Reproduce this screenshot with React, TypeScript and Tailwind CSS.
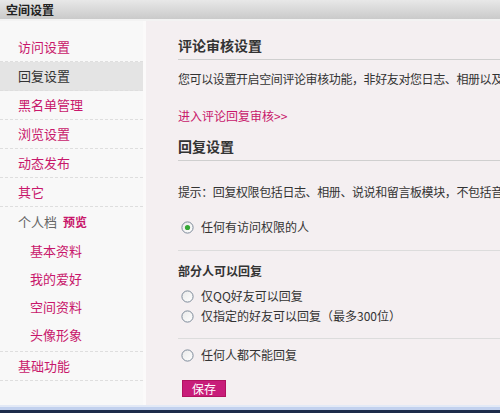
import React from "react";

const font = { fontFamily: '"Noto Sans CJK SC", "Noto Sans", sans-serif' };

function Radio({ checked }: { checked?: boolean }) {
  return (
    <svg width="13" height="13" viewBox="0 0 13 13" className="shrink-0">
      <defs>
        <linearGradient id={checked ? "rg1" : "rg0"} x1="0" y1="0" x2="1" y2="1">
          <stop offset="0" stopColor="#e9e9e9" />
          <stop offset="1" stopColor="#ffffff" />
        </linearGradient>
      </defs>
      <circle cx="6.5" cy="6.5" r="5.6" fill={`url(#${checked ? "rg1" : "rg0"})`} stroke="#7d8a99" strokeWidth="1" />
      {checked && <circle cx="6.5" cy="6.5" r="2.6" fill="#35a835" />}
    </svg>
  );
}

function SideRow({ label, active }: { label: string; active?: boolean }) {
  return (
    <div
      className={`h-[29px] flex items-center pl-[18px] text-[13px] border-b border-dashed border-[#dedede] ${
        active ? "bg-[#e4e4e4] text-[#333]" : "text-[#c8176b]"
      }`}
    >
      {label}
    </div>
  );
}

function SubRow({ label }: { label: string }) {
  return <div className="h-[28px] flex items-center pl-[30px] text-[13px] text-[#c8176b]">{label}</div>;
}

export default function App() {
  return (
    <div className="w-[500px] h-[413px] overflow-hidden flex flex-col bg-[#f4eff1]" style={font}>
      <div className="h-[19px] shrink-0 bg-gradient-to-b from-[#e8e8e8] to-[#cacaca] flex items-center pl-[6px] text-[12px] font-bold text-[#222]">
        空间设置
      </div>
      <div className="h-[2px] shrink-0 bg-[#f3f3f3]" />
      <div className="flex h-[384px] shrink-0">
        <div className="w-[146px] shrink-0 bg-[#f8f8f8] pt-[12px] border-r-[3px] border-[#fbfafa]">
          <SideRow label="访问设置" />
          <SideRow label="回复设置" active />
          <SideRow label="黑名单管理" />
          <SideRow label="浏览设置" />
          <SideRow label="动态发布" />
          <SideRow label="其它" />
          <div className="pb-[2px] border-b border-dashed border-[#dedede]">
            <div className="h-[30px] flex items-center pl-[18px] text-[13px] text-[#666] gap-[6px]">
              个人档<span className="text-[12px] font-bold text-[#c8176b]">预览</span>
            </div>
            <SubRow label="基本资料" />
            <SubRow label="我的爱好" />
            <SubRow label="空间资料" />
            <SubRow label="头像形象" />
          </div>
          <SideRow label="基础功能" />
        </div>
        <div className="flex-1 min-w-0 overflow-hidden pl-[32px] pt-[14px] text-[12px] text-[#333]">
          <div className="w-[400px]">
            <div className="h-[20px] leading-[20px] text-[14px] font-bold text-[#333]">评论审核设置</div>
            <div className="h-[5px] border-b border-[#cfcfcf]" />
            <div className="mt-[9px] h-[20px] leading-[20px] whitespace-nowrap tracking-[-0.4px]">
              您可以设置开启空间评论审核功能，非好友对您日志、相册以及留言板的评论需要经过您的审核
            </div>
            <div className="mt-[17px] h-[20px] leading-[20px] text-[#c8176b]">进入评论回复审核&gt;&gt;</div>
            <div className="mt-[10px] h-[20px] leading-[20px] text-[14px] font-bold">回复设置</div>
            <div className="h-[5px] border-b border-[#cfcfcf]" />
            <div className="mt-[21px] h-[20px] leading-[20px] whitespace-nowrap tracking-[-0.4px]">
              提示：回复权限包括日志、相册、说说和留言板模块，不包括音乐和分享
            </div>
            <div className="mt-[15px] h-[20px] flex items-center gap-[7px] pl-[3px]">
              <Radio checked />
              <span>任何有访问权限的人</span>
            </div>
            <div className="h-[14px] border-b border-[#dcdcdc]" />
            <div className="mt-[10px] h-[20px] leading-[20px] font-bold">部分人可以回复</div>
            <div className="mt-[5px] h-[20px] flex items-center gap-[7px] pl-[3px]">
              <Radio />
              <span>仅QQ好友可以回复</span>
            </div>
            <div className="h-[20px] flex items-center gap-[7px] pl-[3px]">
              <Radio />
              <span>仅指定的好友可以回复（最多300位）</span>
            </div>
            <div className="h-[13px] border-b border-[#dcdcdc]" />
            <div className="mt-[6px] h-[20px] flex items-center gap-[7px] pl-[3px]">
              <Radio />
              <span>任何人都不能回复</span>
            </div>
            <button className="mt-[15px] ml-[4px] w-[44px] h-[17px] bg-[#c81d7a] border border-[#b0135f] text-white text-[12px] leading-[15px] flex items-center justify-center">
              保存
            </button>
          </div>
        </div>
      </div>
      <div className="h-[2px] shrink-0 bg-[#e2e9f6]" />
      <div className="h-[3px] shrink-0 bg-[#c2d1ee]" />
      <div className="h-[3px] shrink-0 bg-[#1d2b4a]" />
    </div>
  );
}
